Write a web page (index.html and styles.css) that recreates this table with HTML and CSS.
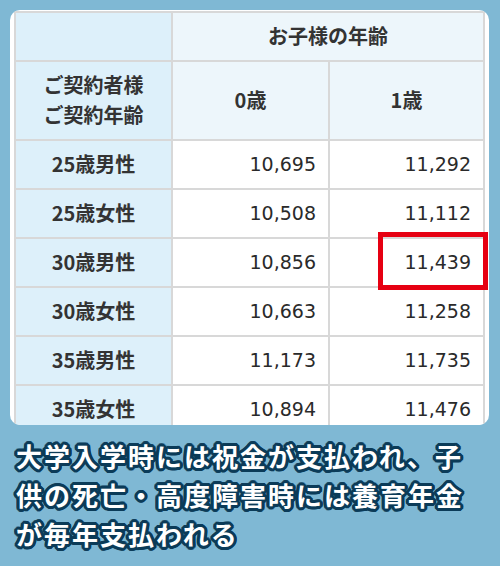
FILE: index.html
```html
<!DOCTYPE html>
<html lang="ja">
<head>
<meta charset="utf-8">
<link rel="stylesheet" href="styles.css">
</head>
<body>
<div class="card">
  <table class="rates">
    <colgroup>
      <col class="c1"><col class="c2"><col class="c3">
    </colgroup>
    <tr class="r-top">
      <td class="label"></td>
      <td class="head" colspan="2">お子様の年齢</td>
    </tr>
    <tr class="r-sub">
      <td class="label">ご契約者様<br>ご契約年齢</td>
      <td class="head">0歳</td>
      <td class="head">1歳</td>
    </tr>
    <tr><td class="label">25歳男性</td><td class="num">10,695</td><td class="num">11,292</td></tr>
    <tr><td class="label">25歳女性</td><td class="num">10,508</td><td class="num">11,112</td></tr>
    <tr><td class="label">30歳男性</td><td class="num">10,856</td><td class="num mark">11,439<span class="redbox"></span></td></tr>
    <tr><td class="label">30歳女性</td><td class="num">10,663</td><td class="num">11,258</td></tr>
    <tr><td class="label">35歳男性</td><td class="num">11,173</td><td class="num">11,735</td></tr>
    <tr><td class="label">35歳女性</td><td class="num">10,894</td><td class="num">11,476</td></tr>
  </table>
</div>
<p class="caption">大学入学時には祝金が支払われ、子<br>供の死亡・高度障害時には養育年金<br>が毎年支払われる</p>
</body>
</html>
```
FILE: styles.css
```css
html, body {
  margin: 0;
  padding: 0;
}
body {
  width: 500px;
  height: 566px;
  overflow: hidden;
  background: #7fb8d4;
  font-family: "Noto Sans CJK JP", "Noto Sans", sans-serif;
}
.card {
  margin: 10px 0 0 10px;
  width: 479px;
  height: 415px;
  box-sizing: border-box;
  padding: 1px 0 0 4px;
  background: #fff;
  border-radius: 10px;
  overflow: hidden;
}
.rates {
  border-collapse: separate;
  border-spacing: 0;
  table-layout: fixed;
  width: 471px;
  border-top: 2px solid #d8d8d8;
  border-left: 2px solid #d8d8d8;
  color: #333;
}
.c1 { width: 157px; }
.c2 { width: 157px; }
.c3 { width: 155px; }
.rates td {
  height: 45px;
  padding: 0 0 2px 0;
  border-right: 2px solid #d8d8d8;
  border-bottom: 2px solid #d8d8d8;
  vertical-align: middle;
}
.rates .r-sub td {
  height: 75px;
}
.label {
  background: #ddf0fa;
  text-align: center;
  font-weight: bold;
  font-size: 20px;
  line-height: 30px;
}
.head {
  background: #edf6fb;
  text-align: center;
  font-weight: bold;
  font-size: 20px;
}
.rates .num {
  background: #fff;
  text-align: right;
  padding-right: 12px;
  font-family: "DejaVu Sans", Verdana, sans-serif;
  font-size: 19px;
  color: #2a2a2a;
}
.mark {
  position: relative;
}
.redbox {
  position: absolute;
  left: 48px;
  right: -5px;
  top: -7px;
  bottom: -4px;
  border: 5px solid #e60012;
}
.caption {
  margin: 11px 0 0 16px;
  font-size: 26px;
  letter-spacing: 2px;
  line-height: 39px;
  font-weight: bold;
  color: #fff;
  text-shadow:
    3px 0 0 #0b3b58, -3px 0 0 #0b3b58, 0 3px 0 #0b3b58, 0 -3px 0 #0b3b58,
    2px 2px 0 #0b3b58, -2px 2px 0 #0b3b58, 2px -2px 0 #0b3b58, -2px -2px 0 #0b3b58,
    3px 1px 0 #0b3b58, -3px 1px 0 #0b3b58, 3px -1px 0 #0b3b58, -3px -1px 0 #0b3b58,
    1px 3px 0 #0b3b58, -1px 3px 0 #0b3b58, 1px -3px 0 #0b3b58, -1px -3px 0 #0b3b58;
}
```
